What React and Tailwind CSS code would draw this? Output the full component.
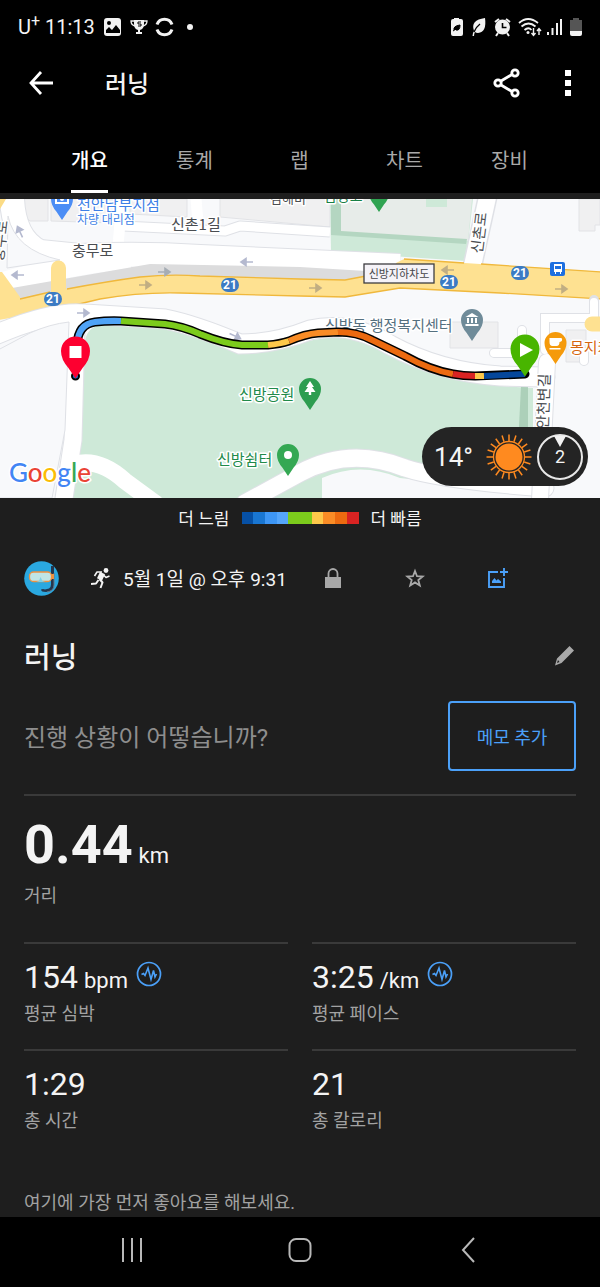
import React from 'react';

const FONT = "font-['Roboto','Noto_Sans_CJK_KR',sans-serif]";

function StatusBar() {
  return (
    <div className="flex h-[54px] items-center justify-between pr-[17px] pl-[18px]">
      <div className="flex items-center gap-2">
        <span className="text-xl leading-6">
          U<sup className="text-base leading-none">+</sup> 11:13
        </span>
        <svg width="92" height="20" viewBox="0 0 92 20" fill="#f2f2f2" aria-hidden="true">
          <rect x="1" y="1" width="17" height="18" rx="3" />
          <circle cx="6" cy="6" r="2" fill="#000" />
          <path d="M3 16v-3l3-3 3 3 4-5 4 5v3z" fill="#000" />
          <path d="M31 3h10v4q0 5-4 6v2h2v2h-6v-2h2v-2q-4-1-4-6z" />
          <path d="M31 4h-3q0 4 4 5M41 4h3q0 4-4 5" fill="none" stroke="#f2f2f2" strokeWidth="1.3" />
          <path d="M38 5h-3v2h3v2h-3" fill="none" stroke="#000" strokeWidth="1" />
          <path d="M54 7.500a8 8 0 0 1 15 0M54 12.500a8 8 0 0 0 15 0" fill="none" stroke="#f2f2f2" strokeWidth="3" />
          <circle cx="87" cy="10" r="3" />
        </svg>
      </div>
      <svg width="134" height="20" viewBox="449 17 134 20" fill="#f2f2f2" aria-hidden="true">
        <path d="M454 19v-1h5v1h2q2 0 2 2v13q0 2-2 2h-8q-2 0-2-2V21q0-2 2-2z" />
        <path d="M454 30q-1-4 6-5 0 6-4 5M453 31l3-2" fill="#000" stroke="#000" />
        <path d="M485 18q2 14-7 15-2 0-3-1-1 2-1 4h-1.500q0-3 1.500-5-4-11 11-13z" />
        <path d="M474 32q2-5 6-8" stroke="#000" strokeWidth="1.400" fill="none" />
        <circle cx="502.500" cy="27" r="7.500" />
        <path d="M495 22l4-3M510 22l-4-3M498 33l-2 3M507 33l2 3" stroke="#f2f2f2" strokeWidth="2" />
        <path d="M502.500 23v4.500h4" stroke="#000" fill="none" strokeWidth="1.600" />
        <path d="M519 23q9-8 19 0M521.500 26.500q7-6 14 0M524.500 30q4-3.500 7 0" fill="none" stroke="#f2f2f2" strokeWidth="1.800" />
        <circle cx="528" cy="32.500" r="1.500" />
        <path d="M533.500 28v7m-2-2l2 2.500 2-2.500M539 35v-6m-2 2l2-2.500 2 2.500" fill="none" stroke="#f2f2f2" strokeWidth="1.400" />
        <path d="M548 32v3M552.500 28v7M557 23v12M561 19v16" stroke="#f2f2f2" strokeWidth="2" />
        <path d="M573 20v-2h6v2h3v11h-12V20z" fill="#555" />
        <path d="M570 31h12v3q0 2-2 2h-8q-2 0-2-2z" />
      </svg>
    </div>
  );
}

function AppBar() {
  return (
    <div className="flex h-[58px] items-center pr-7 pl-7">
      <button aria-label="뒤로">
        <svg className="block" width="26" height="26" viewBox="0 0 26 26" fill="none" stroke="#fff" strokeWidth="2.800">
          <path d="M25 13H3M13 2L3 13l10 11" />
        </svg>
      </button>
      <h1 className="ml-[51px] pt-1 text-2xl leading-8 font-medium">러닝</h1>
      <button className="ml-auto" aria-label="공유">
        <svg className="block" width="28" height="30" viewBox="0 0 28 30" fill="none" stroke="#fff" strokeWidth="2.800">
          <path d="M8 13L19 6.500M8 17l11 6.500" />
          <circle cx="5" cy="15" r="3.200" />
          <circle cx="22" cy="5" r="3.200" />
          <circle cx="22" cy="25" r="3.200" />
        </svg>
      </button>
      <button className="ml-[43px]" aria-label="더보기">
        <svg className="block" width="8" height="28" viewBox="0 0 8 28" fill="#fff">
          <path d="M1 1h6v6H1zM1 11h6v6H1zM1 21h6v6H1z" />
        </svg>
      </button>
    </div>
  );
}

const TABS = ['개요', '통계', '랩', '차트', '장비'];

function Tabs() {
  return (
    <nav className="grid h-[81px] grid-cols-5 pr-[38px] pl-[37px]">
      {TABS.map((tab, i) => (
        <button key={tab} className={i === 0 ? 'flex flex-col items-center font-medium text-white' : 'flex flex-col items-center text-[#a9a9a9]'}>
          <span className={i === 0 ? 'flex h-full items-center border-b-3 border-white pt-5 text-xl' : 'flex h-full items-center border-b-3 border-transparent pt-5 text-xl'}>{tab}</span>
        </button>
      ))}
    </nav>
  );
}

const ROUTE = [
  ['#4fa3f7', 'M77 345Q78 324 95 322Q107 320.500 121 321'],
  ['#7ccb1c', 'M121 321L165 324Q182 326 200 334Q225 344 242 345H268'],
  ['#fdc84a', 'M268 345Q280 344 289 341'],
  ['#f98c26', 'M289 341Q305 334 318 333L338 332'],
  ['#ec6a10', 'M338 332Q357 332 372 340L405 356Q430 370 453 374'],
  ['#d92322', 'M453 374Q463 376 475 376'],
  ['#fdc84a', 'M475 376H484'],
  ['#05479b', 'M484 376L525 374'],
];
const FULL_ROUTE =
  'M77 345Q78 324 95 322Q107 320.500 121 321L165 324Q182 326 200 334Q225 344 242 345H268Q280 344 289 341Q305 334 318 333L338 332Q357 332 372 340L405 356Q430 370 453 374Q463 376 475 376L525 374';

function Shield({ x, y }) {
  return (
    <g>
      <rect x={x - 9} y={y - 7} width="18" height="14" rx="7" fill="#3b7bc4" />
      <text x={x} y={y + 4} fontSize="12" fontWeight="700" fill="#fff" textAnchor="middle">21</text>
    </g>
  );
}

function Arrow({ x, y, angle = 0, color = '#b4b9cf' }) {
  return <path d="M-6 0H5M1 -3.500L6 0L1 3.500z" transform={`translate(${x} ${y}) rotate(${angle})`} stroke={color} fill={color} strokeWidth="1.600" />;
}

function Pin({ x, y, r, color, children }) {
  return (
    <g transform={`translate(${x} ${y})`}>
      <path d={`M${-r} 0A${r} ${r} 0 1 1 ${r} 0Q${r} ${r * 0.6} ${r * 0.5} ${r * 1.15}L0 ${r * 1.9}L${-r * 0.5} ${r * 1.15}Q${-r} ${r * 0.6} ${-r} 0z`} fill={color} />
      {children}
    </g>
  );
}

function RouteMap() {
  return (
    <svg className="block h-auto w-full" viewBox="0 199 600 299" role="img" aria-label="경로 지도">
      <rect y="199" width="600" height="299" fill="#f8f9fb" />
      <g fill="#f0f0f1" stroke="#e2e3e6">
        <path d="M22 199h26v22H30L22 214zM51 199h64v24l-64-2zM130 199h57v18l-57-3zM220 199h110v28l-110-10z" />
        <path d="M579 199h21v26h-5v6h-16zM450 322h48v26h-48zM566 330h20v32h-20z" />
      </g>
      <path d="M330 199h143l-7 62-135-9z" fill="#cee9d8" />
      <path d="M340 199h132l-4 42-128-8z" fill="#e7ece9" />
      <path d="M331 199h10l0 32 126 8-1 5-135-9z" fill="#b4d6c1" />
      <path d="M426 199h21v8h-21z" fill="#cee9d8" />

      <g fill="none" strokeLinejoin="round">
        <path d="M123 226L225 231L240 226L330 232" stroke="#dfe1e6" strokeWidth="11" />
        <path d="M123 226L225 231L240 226L330 232" stroke="#fff" strokeWidth="9" />
        <path d="M122 199L118 246M196 199l2 24" stroke="#fff" strokeWidth="11" />
        <path d="M12 199Q14 240 40 252L80 256Q140 253 200 257L400 266" stroke="#dfe1e6" strokeWidth="26" />
        <path d="M12 199Q14 240 40 252L80 256Q140 253 200 257L400 266" stroke="#fff" strokeWidth="24" />
        <path d="M-5 285Q60 265 130 258" stroke="#fff" strokeWidth="21" />
        <path d="M488 195L472 268" stroke="#dfe1e6" strokeWidth="20" />
        <path d="M488 195L472 268" stroke="#fff" strokeWidth="17" />
      </g>
      <path d="M8 216Q15 250 60 260L7 268z" fill="#f8f9fb" stroke="#dfe1e6" />
      <path d="M12 288L150 264L300 267L366 271V284H300L170 278L20 301z" fill="#dcdcdd" />
      <path d="M-2 307L20 299Q90 283 140 277Q170 274 200 276L300 279L345 280L366 276L395 270L396 263L404 259L480 264L602 272V299L500 293L400 288L345 297L300 296L180 293Q140 292 100 299L50 311L-2 320z" fill="#fee191" />
      <path d="M20 299L50 292M67 289Q110 281 140 277Q170 274 200 276L300 279L345 280L366 276M404 259L464 263M481 264L602 272M602 299L500 293L400 288L345 297L300 296L180 293Q140 292 100 299L75 305" fill="none" stroke="#f0b83c" strokeWidth="1.300" />
      <path d="M-5 272h7L20 297V308L-5 318z" fill="#fee191" />
      <path d="M58.500 268V298" stroke="#fee191" strokeWidth="15" strokeLinecap="round" />
      <path d="M0 199h6L0 209z" fill="#fbdb85" />

      <path d="M84 350Q84 328 100 325L165 328L240 350L285 346Q325 336 350 337L430 372Q460 385 533 388V498H58V470L80 430z" fill="#cee9d8" />
      <path d="M521 386h7v60h-10z" fill="#acd0b9" />
      <path d="M322 478Q360 461 400 478L535 492V498H322z" fill="#f8f9fb" />

      <g fill="none" strokeLinecap="round">
        <path d="M76 335L73 440L63 505" stroke="#dfe1e6" strokeWidth="19" />
        <path d="M-5 335Q50 311 85 314L165 319Q195 325 240 344Q275 344 310 330Q350 321 390 345Q440 372 500 376L545 377" stroke="#dfe1e6" strokeWidth="21" />
        <path d="M-5 335Q50 311 85 314L165 319Q195 325 240 344Q275 344 310 330Q350 321 390 345Q440 372 500 376L545 377" stroke="#fff" strokeWidth="19" />
        <path d="M76 325L73 440L63 505M75 464Q100 458 125 481L155 503" stroke="#fff" strokeWidth="17" />
        <path d="M245 503L300 473Q350 446 405 468Q440 480 545 488" stroke="#dfe1e6" strokeWidth="19" />
        <path d="M245 503L300 473Q350 446 405 468Q440 480 545 488" stroke="#fff" strokeWidth="17" />
        <path d="M547 362L540 500" stroke="#dfe1e6" strokeWidth="18" />
        <path d="M594 300V318H545V350M522 330v24M494 353h36M584 361V352" stroke="#dfe1e6" strokeWidth="10" />
        <path d="M547 362L540 500" stroke="#fff" strokeWidth="16" />
        <path d="M594 302V318H545V350M522 330v24M494 353h36M584 361V352" stroke="#fff" strokeWidth="8" />
        <path d="M605 324H592" stroke="#fee191" strokeWidth="15" />
      </g>
      <path d="M-2 350L30 333Q50 324 69 322L65 430L52 498H-2z" fill="#f8f9fb" stroke="#dfe1e6" />

      <Arrow x={20} y={232} angle={-115} />
      <Arrow x={18} y={275} angle={180} />
      <Arrow x={164} y={272} color="#a6adb5" />
      <Arrow x={145} y={285} color="#c1ae83" />
      <Arrow x={247} y={262} angle={180} />
      <Arrow x={315} y={288} color="#c1ae83" />
      <Arrow x={448} y={270} angle={180} color="#c1ae83" />
      <Arrow x={561} y={289} color="#c1ae83" />
      <Arrow x={83} y={313} />
      <Arrow x={235} y={336} angle={25} />

      <Shield x={53} y={299} />
      <Shield x={230} y={285} />
      <Shield x={449} y={282} />
      <Shield x={520} y={273} />
      <rect x="550" y="262" width="15" height="14" rx="2" fill="#1d6fe0" />
      <path d="M554 264h8v8h-1v2h-1v-2h-4v2h-1v-2h-1z" fill="#fff" />
      <path d="M555 266h6v3h-6z" fill="#1d6fe0" />

      <g stroke="#fff" strokeWidth="3" strokeLinejoin="round" paintOrder="stroke" className="font-['Noto_Sans_CJK_KR',sans-serif]">
        <text x="77" y="210" fontSize="15" fill="#3d7fe6">천안남부지점</text>
        <text x="77" y="224" fontSize="12" fill="#3d7fe6">차량 대리점</text>
        <text x="171" y="230" fontSize="15" fill="#4a4d51">신촌1길</text>
        <text x="72" y="256" fontSize="15" fill="#4a4d51">충무로</text>
        <text x="270" y="203" fontSize="13" fill="#4a4d51">김해비</text>
        <text x="324" y="201" fontSize="14" fill="#188045">남방고</text>
        <text x="325" y="331" fontSize="15" fill="#55707f">신방동 행정복지센터</text>
        <text x="239" y="400" fontSize="15" fill="#218a4a">신방공원</text>
        <text x="217" y="465" fontSize="15" fill="#218a4a">신방쉼터</text>
        <text x="570" y="353" fontSize="15" fill="#d5660f">몽지카페</text>
        <text transform="translate(482 254) rotate(-83)" fontSize="15" fill="#4a4d51">신촌로</text>
        <text transform="translate(548 429) rotate(-88)" fontSize="15" fill="#4a4d51">안천변길</text>
        <text transform="translate(3 262) rotate(-83)" fontSize="15" fill="#4a4d51">충무로</text>
      </g>
      <rect x="364" y="264" width="70" height="19" fill="#f5f3f8" stroke="#3c3c40" strokeWidth="1.300" />
      <text x="399" y="278" fontSize="11" fill="#46464a" textAnchor="middle" className="font-['Noto_Sans_CJK_KR',sans-serif]">신방지하차도</text>

      <path d={FULL_ROUTE} fill="none" stroke="#000" strokeWidth="9" strokeLinecap="round" />
      {ROUTE.map(([color, d]) => (
        <path key={d} d={d} fill="none" stroke={color} strokeWidth="6" />
      ))}
      <circle cx="75.500" cy="376" r="3.500" fill="#1976d2" stroke="#000" strokeWidth="2" />

      <Pin x={62} y={199} r={11} color="#4b8df5">
        <path d="M-6 -3H6V4H-6z" stroke="#fff" strokeWidth="2" fill="none" />
        <circle r="2" fill="#fff" />
      </Pin>
      <Pin x={379} y={193} r={10} color="#2fa351" />
      <Pin x={472} y={320} r={11} color="#6f8b99">
        <path d="M-6.500 -3L0 -7L6.500 -3zM-5 -2h2v5h-2zM-1 -2h2v5h-2zM3 -2h2v5h-2zM-6.500 4h13v2h-13z" fill="#fff" />
      </Pin>
      <Pin x={310} y={389} r={11} color="#2d9d50">
        <path d="M0 -8L4 -2H2L5.500 3H1.200V6H-1.200V3H-5.500L-2 -2H-4z" fill="#fff" />
      </Pin>
      <Pin x={288} y={455} r={11} color="#34a853">
        <circle r="4" fill="#fff" />
      </Pin>
      <Pin x={555.500} y={343} r={11} color="#f59a0b">
        <path d="M-6 -5H6q2 3-2 4q0 4-3 4h-4q-3 0-3-4zM-6 5h11v1.500h-11z" fill="#fff" />
      </Pin>
      <Pin x={75.500} y={351} r={14.5} color="#fd0030">
        <path d="M-6 -5H6V7H-6z" fill="#fff" />
      </Pin>
      <Pin x={525} y={349} r={14.5} color="#48b500">
        <path d="M-5 -6L8 1L-5 8z" fill="#fff" />
      </Pin>

      <text x="9" y="482" fontSize="26" strokeWidth="3" stroke="#fff" paintOrder="stroke" strokeLinejoin="round" className="font-['Lato',sans-serif] font-medium">
        <tspan fill="#4285f4">G</tspan>
        <tspan fill="#ea4335">o</tspan>
        <tspan fill="#fbbc05">o</tspan>
        <tspan fill="#4285f4">g</tspan>
        <tspan fill="#34a853">l</tspan>
        <tspan fill="#ea4335">e</tspan>
      </text>
    </svg>
  );
}

const RAY_ANGLES = Array.from({ length: 20 }, (_, i) => i * 18);

function WeatherPill() {
  return (
    <div className="absolute right-3 bottom-3 flex h-[59px] items-center rounded-full bg-[#242424] pr-[5px] pl-3">
      <span className="text-[26px] leading-8">14°</span>
      <svg className="ml-3" width="48" height="48" viewBox="-24 -24 48 48" aria-hidden="true">
        <circle r="13.500" fill="#ff8a1f" />
        <circle r="15.500" fill="none" stroke="#ff8a1f" strokeWidth="1.300" />
        {RAY_ANGLES.map((a) => (
          <path key={a} d="M0 -16V-22.500" transform={`rotate(${a})`} stroke="#ff8a1f" strokeWidth="1.500" />
        ))}
      </svg>
      <div className="relative ml-1 flex size-[46px] items-center justify-center rounded-full border-2 border-[#e8e8e8] text-lg">
        2
        <svg className="absolute top-0 left-1/2 -translate-x-1/2" width="12" height="11" viewBox="0 0 12 11" fill="#f2f2f2" aria-hidden="true">
          <path d="M0 0h12L6 11z" />
        </svg>
      </div>
    </div>
  );
}

function Legend() {
  return (
    <div className="flex h-10 items-center justify-center gap-3 text-[17px] leading-6">
      <span className="pt-0.5">더 느림</span>
      <div className="flex h-3 w-[117px]">
        <div className="flex-1 bg-[#0650a5]" />
        <div className="flex-1 bg-[#1976d2]" />
        <div className="flex-1 bg-[#3d96f5]" />
        <div className="flex-1 bg-[#55a6fb]" />
        <div className="flex-2 bg-[#7ccb1c]" />
        <div className="flex-1 bg-[#fdc84a]" />
        <div className="flex-1 bg-[#f98c26]" />
        <div className="flex-1 bg-[#ec6a10]" />
        <div className="flex-1 bg-[#d92322]" />
      </div>
      <span className="pt-0.5">더 빠름</span>
    </div>
  );
}

function ActivityMeta() {
  return (
    <div className="mt-5 flex h-10 items-center">
      <svg width="35" height="35" viewBox="0 0 35 35" aria-hidden="true">
        <circle cx="17.500" cy="17.500" r="17.300" fill="#2aa8e0" />
        <path d="M27 5h3v19q0 6-8 7-5 0-5-2.500l2-.5 2 .5 4-1q2-1 2-4z" fill="#24364d" />
        <path d="M30 12v12q0 6-7 7" stroke="#647487" fill="none" />
        <rect x="5.500" y="11" width="22" height="9.500" rx="4" fill="#bfe5e6" stroke="#ee9140" strokeWidth="1.300" />
        <path d="M12 21l3-1 1.500-4 2 4 3 1z" fill="#7fd0e5" />
        <path d="M27 13h3v5h-3z" fill="#ee9140" />
      </svg>
      <svg className="ml-8" width="20" height="22" viewBox="0 0 20 22" aria-hidden="true" fill="none" stroke="#f4f4f4" strokeLinejoin="round">
        <circle cx="15" cy="3.500" r="2.400" fill="#f4f4f4" stroke="none" />
        <path d="M11.500 6L8.500 12.500" strokeWidth="5.500" />
        <path d="M11 5L6 5L3.500 9M12 7.500l3 3 3.500-1.500" strokeWidth="1.600" />
        <path d="M8.500 12l3 3.500-2 5.500M7.500 13l-2.500 3.500-5 .5" strokeWidth="2" />
      </svg>
      <span className="ml-3 pt-1 text-[19px] leading-6">5월 1일 @ 오후 9:31</span>
      <button className="ml-[38px]" aria-label="비공개">
        <svg className="block" width="16" height="20" viewBox="0 0 16 20" aria-hidden="true">
          <path d="M0 9h16v11H0z" fill="#a8a8a8" />
          <path d="M3.500 10V5.500a4.500 4.500 0 0 1 9 0V10" fill="none" stroke="#a8a8a8" strokeWidth="1.800" />
        </svg>
      </button>
      <button className="ml-16" aria-label="즐겨찾기">
        <svg className="block" width="20" height="20" viewBox="0 0 20 20" fill="none" stroke="#a8a8a8" strokeWidth="1.800">
          <path d="M10 3l2 5.200 5.700.3-4.400 3.500 1.500 5.500-4.800-3.100-4.800 3.100 1.500-5.500-4.400-3.500 5.700-.3z" />
        </svg>
      </button>
      <button className="ml-[62px]" aria-label="사진 추가">
        <svg className="block" width="21" height="21" viewBox="0 0 21 21" fill="none" stroke="#4ba0f8" strokeWidth="1.900">
          <path d="M11 4H2v15h15V10" />
          <path d="M13 4h8M17 0v8" />
          <path d="M5 15v-2l2.500-3 2 2.500 1.500-1.500 3 2.500V15z" fill="#4ba0f8" stroke="none" />
        </svg>
      </button>
    </div>
  );
}

function PulseIcon() {
  return (
    <svg className="mb-2 ml-2" width="26" height="26" viewBox="0 0 26 26" fill="none" stroke="#4ba0f8" aria-hidden="true">
      <circle cx="13" cy="13" r="11.500" strokeWidth="1.700" />
      <path d="M5.500 13.500l2-1 1.500 2 3-7.500 3 11.500 2.500-9 1.500 6.500 1.500-3" strokeWidth="1.600" />
    </svg>
  );
}

function Stat({ value, unit, label, pulse }) {
  return (
    <div className="flex h-[107px] flex-col border-t-2 border-[#3a3a3a] pt-[15px]">
      <dd className="flex h-9 items-end">
        <span className="text-[32px] leading-9">{value}</span>
        {unit && <span className="ml-1.5 text-[22px] leading-7">{unit}</span>}
        {pulse && <PulseIcon />}
      </dd>
      <dt className="mt-[7px] text-lg leading-6 text-[#a2a2a2]">{label}</dt>
    </div>
  );
}

function SystemNav() {
  return (
    <nav className="mt-auto flex h-[70px] items-center justify-around bg-black px-12 pb-1">
      <button aria-label="최근 앱">
        <svg className="block" width="24" height="26" viewBox="0 0 24 26" stroke="#b8b8b8" strokeWidth="2">
          <path d="M3 1v24M12 1v24M21 1v24" />
        </svg>
      </button>
      <button aria-label="홈">
        <svg className="block" width="24" height="26" viewBox="0 0 24 26" fill="none" stroke="#b8b8b8" strokeWidth="2">
          <rect x="1.500" y="2" width="21" height="22" rx="6.500" />
        </svg>
      </button>
      <button aria-label="이전">
        <svg className="block" width="24" height="26" viewBox="0 0 24 26" fill="none" stroke="#b8b8b8" strokeWidth="2">
          <path d="M18 1L7 13l11 12" />
        </svg>
      </button>
    </nav>
  );
}

export default function App() {
  return (
    <div className={`flex min-h-screen flex-col bg-[#1e1e1e] text-[#f4f4f4] ${FONT}`}>
      <header className="bg-black">
        <StatusBar />
        <AppBar />
        <Tabs />
      </header>
      <main>
        <section className="relative mt-1.5">
          <RouteMap />
          <WeatherPill />
        </section>
        <Legend />
        <div className="px-6">
          <ActivityMeta />
          <div className="mt-9 flex h-11 items-center justify-between">
            <h2 className="pt-1 text-[29px] leading-10 font-medium">러닝</h2>
            <button aria-label="이름 편집">
              <svg className="block" width="22" height="22" viewBox="0 0 22 22" fill="#a8a8a8">
                <path d="M15.500 1l4.500 4.500L7.500 18 1 20.500 3 13.500zM4 15l-1 3 2.500-1z" fillRule="evenodd" />
              </svg>
            </button>
          </div>
          <div className="mt-[23px] flex items-center justify-between">
            <p className="pt-1 text-2xl leading-8 text-[#8e8e8e]">진행 상황이 어떻습니까?</p>
            <button className="h-[70px] w-32 rounded-sm border-2 border-[#4ba0f8] pt-1 text-lg text-[#4ba0f8]">메모 추가</button>
          </div>
          <dl>
            <div className="mt-[23px] flex h-[148px] flex-col border-t-2 border-[#3a3a3a] pt-[21px]">
              <dd className="flex items-baseline">
                <span className="text-[54px] leading-14 font-bold">0.44</span>
                <span className="ml-1.5 text-[22px]">km</span>
              </dd>
              <dt className="mt-[11px] text-lg leading-6 text-[#a2a2a2]">거리</dt>
            </div>
            <div className="grid grid-cols-2 gap-x-6">
              <Stat value="154" unit="bpm" label="평균 심박" pulse />
              <Stat value="3:25" unit="/km" label="평균 페이스" pulse />
              <Stat value="1:29" label="총 시간" />
              <Stat value="21" label="총 칼로리" />
            </div>
          </dl>
          <p className="mt-[35px] pb-0.5 text-lg leading-6 text-[#a2a2a2]">여기에 가장 먼저 좋아요를 해보세요.</p>
        </div>
      </main>
      <SystemNav />
    </div>
  );
}
